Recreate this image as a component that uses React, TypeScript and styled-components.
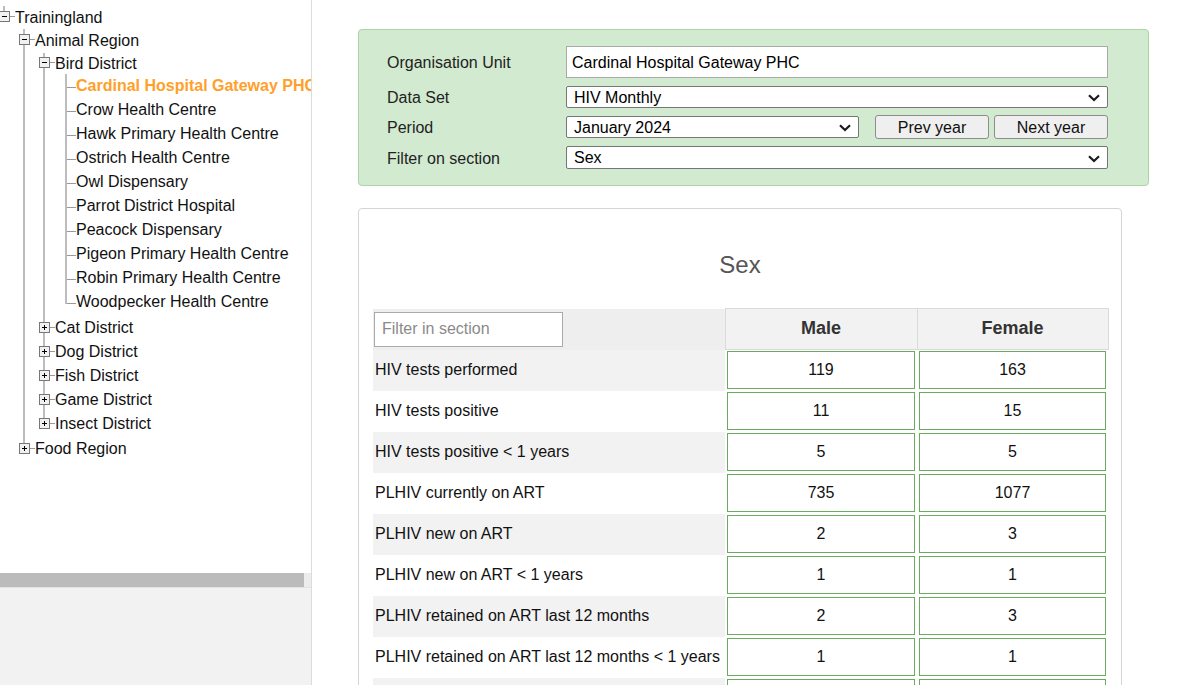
import React from 'react';
import styled, { createGlobalStyle } from 'styled-components';

const FONT = '"Liberation Sans", Arial, Helvetica, sans-serif';
const LINE = '#bdbdbd';
const HLINE = '#9a9a9a';

const GlobalStyle = createGlobalStyle`
  html, body { margin: 0; padding: 0; background: #fff; }
  body { font-family: ${FONT}; font-size: 16px; color: #000; }
  #root { height: 100vh; }
`;

const Page = styled.div`
  display: flex;
  height: 685px;
  overflow: hidden;
`;

/* ---------- Sidebar / tree ---------- */

const Sidebar = styled.aside`
  flex: none;
  width: 311px;
  display: flex;
  flex-direction: column;
  border-right: 1px solid #dcdcdc;
  background: #f2f2f2;
`;

const TreeViewport = styled.div`
  flex: none;
  height: 573px;
  box-sizing: border-box;
  padding-top: 6px;
  overflow: hidden;
  background: #fff;
  white-space: nowrap;
`;

const ScrollTrack = styled.div`
  flex: none;
  height: 14px;
  display: flex;
  background: #ececec;
  border-bottom: 1px solid #e2e2e2;
`;

const ScrollThumb = styled.div`
  width: 304px;
  background: #bbbbbb;
`;

const TreeRow = styled.div<{ $h: number }>`
  display: flex;
  align-items: flex-start;
  height: ${(p) => p.$h}px;
`;

const Guide = styled.span<{ $line: boolean }>`
  flex: none;
  width: 20px;
  align-self: stretch;
  background: ${(p) =>
    p.$line
      ? `linear-gradient(to right, transparent 3px, ${LINE} 3px, ${LINE} 5px, transparent 5px)`
      : 'none'};
`;

const ConnectorSvg = styled.svg`
  flex: none;
  display: block;
  overflow: visible;
`;

const NodeLabel = styled.span<{ $c: number; $selected?: boolean }>`
  flex: none;
  font-size: 16px;
  line-height: ${(p) => p.$c}px;
  color: ${(p) => (p.$selected ? '#ffa02a' : '#111')};
  font-weight: ${(p) => (p.$selected ? 700 : 400)};
`;

type TreeItem = {
  label: string;
  depth: number;
  kind: 'open' | 'closed' | 'leaf';
  guides: boolean[];
  last: boolean;
  root?: boolean;
  h: number;
  c: number;
  selected?: boolean;
};

const leaves = [
  'Cardinal Hospital Gateway PHC',
  'Crow Health Centre',
  'Hawk Primary Health Centre',
  'Ostrich Health Centre',
  'Owl Dispensary',
  'Parrot District Hospital',
  'Peacock Dispensary',
  'Pigeon Primary Health Centre',
  'Robin Primary Health Centre',
  'Woodpecker Health Centre',
];

const districts = ['Cat District', 'Dog District', 'Fish District', 'Game District', 'Insect District'];

const tree: TreeItem[] = [
  { label: 'Trainingland', depth: 0, kind: 'open', guides: [], last: true, root: true, h: 23, c: 23 },
  { label: 'Animal Region', depth: 1, kind: 'open', guides: [false], last: false, h: 24, c: 23 },
  { label: 'Bird District', depth: 2, kind: 'open', guides: [false, true], last: false, h: 21, c: 21 },
  ...leaves.map((label, i) => ({
    label,
    depth: 3,
    kind: 'leaf' as const,
    guides: [false, true, true],
    last: i === leaves.length - 1,
    h: i === leaves.length - 1 ? 26 : 24,
    c: 24,
    selected: i === 0,
  })),
  ...districts.map((label, i) => ({
    label,
    depth: 2,
    kind: 'closed' as const,
    guides: [false, true],
    last: i === districts.length - 1,
    h: i === districts.length - 1 ? 25 : 24,
    c: 24,
  })),
  { label: 'Food Region', depth: 1, kind: 'closed', guides: [false], last: true, h: 24, c: 24 },
];

function Connector({ item }: { item: TreeItem }) {
  const { h, c, kind, last, root } = item;
  if (kind === 'leaf') {
    const y = 13;
    return (
      <ConnectorSvg width={16} height={h}>
        <rect x={5} y={0} width={2} height={last ? y + 1 : h} fill={LINE} />
        <rect x={7} y={y} width={9} height={1} fill={HLINE} />
      </ConnectorSvg>
    );
  }
  const cy = Math.floor(c / 2) - 1;
  const by = cy - 5;
  return (
    <ConnectorSvg width={15} height={h}>
      {root ? (
        <rect x={3} y={0} width={2} height={by} fill={LINE} />
      ) : (
        <rect x={3} y={0} width={2} height={last ? cy : h} fill={LINE} />
      )}
      <rect x={-0.5} y={by + 0.5} width={10} height={10} fill="#f1f1f1" stroke="#777" />
      <rect x={2} y={cy} width={5} height={1} fill="#000" />
      {kind === 'closed' && <rect x={4} y={cy - 2} width={1} height={5} fill="#000" />}
      <rect x={10} y={cy} width={5} height={1} fill={HLINE} />
    </ConnectorSvg>
  );
}

function OrgTree() {
  return (
    <TreeViewport>
      {tree.map((item) => (
        <TreeRow key={item.label} $h={item.h}>
          {item.guides.map((g, k) => (
            <Guide key={k} $line={g} />
          ))}
          <Connector item={item} />
          <NodeLabel $c={item.c} $selected={item.selected}>
            {item.label}
          </NodeLabel>
        </TreeRow>
      ))}
    </TreeViewport>
  );
}

/* ---------- Main ---------- */

const Main = styled.main`
  flex: 1;
  min-width: 0;
  padding: 29px 0 0 46px;
  overflow: hidden;
`;

const FilterPanel = styled.section`
  width: 791px;
  box-sizing: border-box;
  background: #d2ead0;
  border: 1px solid #a9d6a3;
  border-radius: 4px;
  padding: 16px 40px 16px 28px;
  display: grid;
  grid-template-columns: 179px 542px;
  grid-template-rows: 32px 22px 22px 23px;
  row-gap: 8px;
`;

const FieldLabel = styled.label`
  display: flex;
  align-items: center;
  padding-top: 2px;
  font-size: 16px;
  color: #222;
`;

const TextField = styled.input`
  width: 100%;
  height: 32px;
  box-sizing: border-box;
  border: 1px solid #a9a9a9;
  border-radius: 0;
  padding: 1px 5px 0;
  font: 16px ${FONT};
  color: #000;
  background: #fff;
  outline: none;
`;

const SelectWrap = styled.span<{ $w: number }>`
  position: relative;
  display: inline-block;
  flex: none;
  width: ${(p) => p.$w}px;
  height: 100%;
`;

const Select = styled.select`
  appearance: none;
  -webkit-appearance: none;
  display: block;
  width: 100%;
  height: 100%;
  box-sizing: border-box;
  border: 1px solid #767676;
  border-radius: 2px;
  padding: 0 24px 0 7px;
  font: 16px ${FONT};
  color: #000;
  background: #fff;
  outline: none;
`;

const Chevron = styled.svg`
  position: absolute;
  right: 8px;
  top: 50%;
  margin-top: -3px;
  pointer-events: none;
`;

function DropDown({ w, value }: { w: number; value: string }) {
  return (
    <SelectWrap $w={w}>
      <Select defaultValue={value}>
        <option value={value}>{value}</option>
      </Select>
      <Chevron width="12" height="8" viewBox="0 0 12 8">
        <path d="M1 1.3 L6 6 L11 1.3" fill="none" stroke="#1a1a1a" strokeWidth="2.2" />
      </Chevron>
    </SelectWrap>
  );
}

const PeriodRow = styled.div`
  display: flex;
  align-items: center;
  height: 100%;
`;

const YearButton = styled.button<{ $ml: number }>`
  flex: none;
  width: 114px;
  height: 24px;
  margin-left: ${(p) => p.$ml}px;
  box-sizing: border-box;
  border: 1px solid #8d8d8d;
  border-radius: 3px;
  background: #efefef;
  font: 16px ${FONT};
  color: #111;
  padding: 1px 0 0;
`;

const SectionCard = styled.section`
  width: 764px;
  box-sizing: border-box;
  margin-top: 22px;
  border: 1px solid #d4d4d4;
  border-radius: 4px;
  padding: 0 14px;
  background: #fff;
`;

const SectionTitle = styled.h3`
  margin: 42px 0 29px;
  text-align: center;
  font-size: 24px;
  line-height: 28px;
  font-weight: 400;
  color: #555;
`;

const DataTable = styled.table`
  width: 735px;
  border-collapse: collapse;
  table-layout: fixed;
`;

const FilterHead = styled.th`
  background: #eeeeee;
  padding: 0 0 0 1px;
  text-align: left;
  vertical-align: middle;
  height: 41px;
  box-sizing: border-box;
`;

const FilterInput = styled.input`
  width: 189px;
  height: 35px;
  box-sizing: border-box;
  border: 1px solid #a9a9a9;
  padding: 0 7px;
  font: 16px ${FONT};
  background: #fff;
  outline: none;
  &::placeholder {
    color: #8a8a8a;
  }
`;

const ColumnHead = styled.th`
  background: #f2f2f2;
  border: 1px solid #dadada;
  padding: 0 0 1px;
  font-size: 18px;
  font-weight: 700;
  color: #333;
  text-align: center;
  vertical-align: middle;
`;

const BodyRow = styled.tr`
  height: 41px;
`;

const RowLabel = styled.td<{ $striped: boolean }>`
  background: ${(p) => (p.$striped ? '#f2f2f2' : '#fff')};
  padding: 0 0 0 2px;
  font-size: 16px;
  color: #111;
  white-space: nowrap;
  vertical-align: middle;
`;

const ValueCell = styled.td`
  padding: 0 2px;
  background: #fff;
  vertical-align: middle;
`;

const ValueInput = styled.input`
  display: block;
  width: 100%;
  height: 38px;
  box-sizing: border-box;
  border: 1px solid #6aab60;
  border-radius: 0;
  padding: 0;
  text-align: center;
  font: 16px ${FONT};
  color: #111;
  background: #fff;
  outline: none;
`;

type DataRow = { label: string; male: string; female: string };

const rows: DataRow[] = [
  { label: 'HIV tests performed', male: '119', female: '163' },
  { label: 'HIV tests positive', male: '11', female: '15' },
  { label: 'HIV tests positive < 1 years', male: '5', female: '5' },
  { label: 'PLHIV currently on ART', male: '735', female: '1077' },
  { label: 'PLHIV new on ART', male: '2', female: '3' },
  { label: 'PLHIV new on ART < 1 years', male: '1', female: '1' },
  { label: 'PLHIV retained on ART last 12 months', male: '2', female: '3' },
  { label: 'PLHIV retained on ART last 12 months < 1 years', male: '1', female: '1' },
  { label: '', male: '', female: '' },
];

export default function App() {
  return (
    <>
      <GlobalStyle />
      <Page>
        <Sidebar>
          <OrgTree />
          <ScrollTrack>
            <ScrollThumb />
          </ScrollTrack>
        </Sidebar>
        <Main>
          <FilterPanel>
            <FieldLabel>Organisation Unit</FieldLabel>
            <TextField readOnly value="Cardinal Hospital Gateway PHC" />
            <FieldLabel>Data Set</FieldLabel>
            <DropDown w={542} value="HIV Monthly" />
            <FieldLabel>Period</FieldLabel>
            <PeriodRow>
              <DropDown w={293} value="January 2024" />
              <YearButton $ml={16}>Prev year</YearButton>
              <YearButton $ml={5}>Next year</YearButton>
            </PeriodRow>
            <FieldLabel>Filter on section</FieldLabel>
            <DropDown w={542} value="Sex" />
          </FilterPanel>
          <SectionCard>
            <SectionTitle>Sex</SectionTitle>
            <DataTable>
              <colgroup>
                <col style={{ width: 352 }} />
                <col style={{ width: 192 }} />
                <col style={{ width: 191 }} />
              </colgroup>
              <thead>
                <tr>
                  <FilterHead>
                    <FilterInput placeholder="Filter in section" />
                  </FilterHead>
                  <ColumnHead>Male</ColumnHead>
                  <ColumnHead>Female</ColumnHead>
                </tr>
              </thead>
              <tbody>
                {rows.map((r, i) => (
                  <BodyRow key={i}>
                    <RowLabel $striped={i % 2 === 0}>{r.label}</RowLabel>
                    <ValueCell>
                      <ValueInput readOnly value={r.male} />
                    </ValueCell>
                    <ValueCell>
                      <ValueInput readOnly value={r.female} />
                    </ValueCell>
                  </BodyRow>
                ))}
              </tbody>
            </DataTable>
          </SectionCard>
        </Main>
      </Page>
    </>
  );
}
